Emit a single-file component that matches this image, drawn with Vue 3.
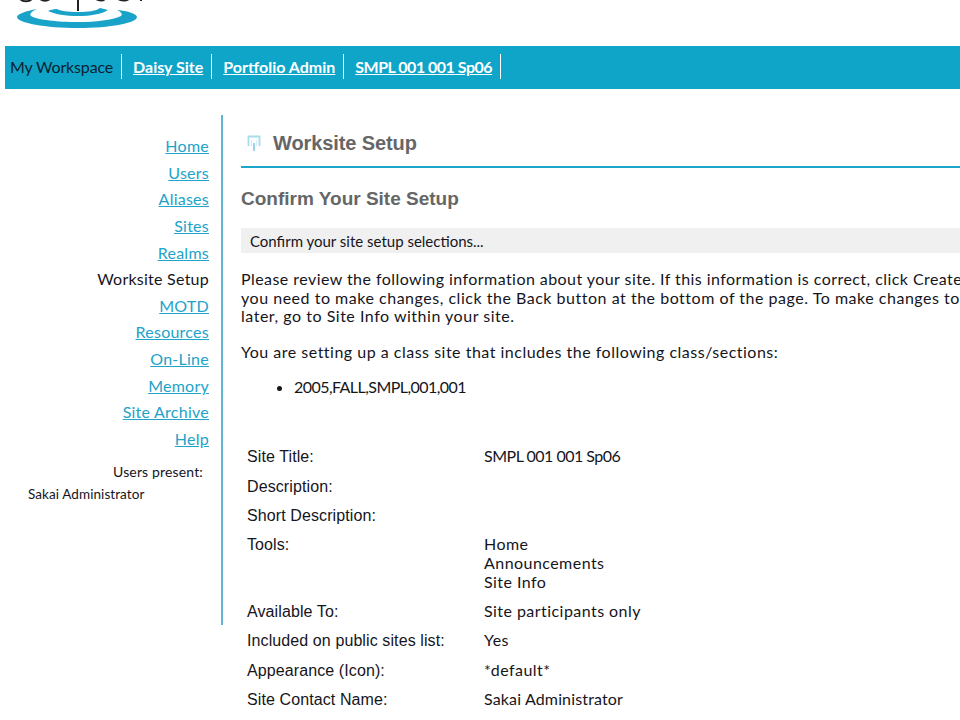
<script setup>
const links = [
  { t: 'Home', a: true }, { t: 'Users', a: true }, { t: 'Aliases', a: true }, { t: 'Sites', a: true },
  { t: 'Realms', a: true }, { t: 'Worksite Setup', a: false }, { t: 'MOTD', a: true }, { t: 'Resources', a: true },
  { t: 'On-Line', a: true }, { t: 'Memory', a: true }, { t: 'Site Archive', a: true }, { t: 'Help', a: true }
]
const rows = [
  { l: 'Site Title:', v: ['SMPL 001 001 Sp06'] },
  { l: 'Description:', v: [''] },
  { l: 'Short Description:', v: [''] },
  { l: 'Tools:', v: ['Home', 'Announcements', 'Site Info'] },
  { l: 'Available To:', v: ['Site participants only'] },
  { l: 'Included on public sites list:', v: ['Yes'] },
  { l: 'Appearance (Icon):', v: ['*default*'] },
  { l: 'Site Contact Name:', v: ['Sakai Administrator'] }
]
</script>

<template>
  <div class="page">
    <header class="logo">
      <svg width="160" height="46" viewBox="0 0 160 46">
        <path d="M37 9 C26 11 17 14 17 17 C17 23 46 28 78 28 C110 28 137 23 137 17 C137 14 128 11 117 10 C121 12 123 14 121 16 C112 20 96 22 78 22 C58 22 38 20 31 16 C29 14 32 11 37 9Z" fill="#1aa3c9"/>
        <path d="M48 11 C54 14 66 16 78 16 C90 16 102 14 108 10 C104 9 101 8 100 8 C96 11 88 12 78 12 C68 12 60 11 57 9 C53 9 50 10 48 11Z" fill="#1aa3c9"/>
        <path d="M20 -1 C23 2 29 2 32 -1 M40 -1 C43 1 47 1 50 -1 M78 0 V11 M96 -1 C99 1 103 1 105 -1 M118 -1 C121 1 126 1 129 -1 M141 0 V1" stroke="#222" stroke-width="2" fill="none"/>
      </svg>
    </header>
    <nav class="sitenav">
      <span class="tab current">My Workspace</span>
      <a class="tab">Daisy Site</a>
      <a class="tab">Portfolio Admin</a>
      <a class="tab">SMPL 001 001 Sp06</a>
    </nav>
    <div class="body">
      <aside class="side">
        <ul class="menu">
          <li v-for="l in links" :key="l.t" :class="{ link: l.a }">{{ l.t }}</li>
        </ul>
        <div class="present">Users present:</div>
        <div class="who">Sakai Administrator</div>
      </aside>
      <main class="main">
        <div class="title">
          <svg class="ticon" width="14" height="17" viewBox="0 0 14 17">
            <path d="M1.5 11 V1.5 H12.5 V11" stroke="#a9dcec" stroke-width="1.8" fill="none"/>
            <path d="M4.5 11 V5 M9.5 11 V5" stroke="#d3eef6" stroke-width="1.2" fill="none"/>
            <path d="M7 8 V16" stroke="#8fd2e6" stroke-width="1.8" fill="none"/>
          </svg>
          <h1>Worksite Setup</h1>
        </div>
        <h2>Confirm Your Site Setup</h2>
        <div class="instr">Confirm your site setup selections...</div>
        <p class="para">Please review the following information about your site. If this information is correct, click Create<br>you need to make changes, click the Back button at the bottom of the page. To make changes to<br>later, go to Site Info within your site.</p>
        <p class="para second">You are setting up a class site that includes the following class/sections:</p>
        <ul class="sections"><li>2005,FALL,SMPL,001,001</li></ul>
        <div class="table">
          <div v-for="r in rows" :key="r.l" class="row">
            <div class="label">{{ r.l }}</div>
            <div class="value"><div v-for="(v, i) in r.v" :key="i">{{ v }}</div></div>
          </div>
        </div>
      </main>
    </div>
  </div>
</template>

<style>
html, body { margin: 0; background: #fff; overflow: hidden; }
</style>

<style scoped>
.page { width: 960px; height: 720px; overflow: hidden; font-family: Lato, "Open Sans", sans-serif; color: #15151c; letter-spacing: 0.45px; }
.logo { height: 46px; overflow: hidden; }
.logo svg { display: block; }
.sitenav { margin-left: 5px; height: 43px; background: #0ea5c9; display: flex; align-items: center; font-size: 16px; padding-left: 5px; padding-bottom: 2px; box-sizing: border-box; letter-spacing: 0; }
.tab { border-right: 1px solid #fff; line-height: 25px; margin-right: 11px; padding-right: 8px; color: #fff; text-decoration: underline; font-weight: 700; white-space: nowrap; }
.tab:last-child { letter-spacing: -0.5px; }
.tab.current { color: #0a2230; text-decoration: none; font-weight: 400; letter-spacing: -0.15px; }
.body { display: flex; align-items: flex-start; padding-top: 26px; }
.side { width: 221px; border-right: 2px solid #5fb6d2; flex: none; text-align: right; padding-top: 18px; height: 492px; }
.menu { list-style: none; margin: 0; padding: 0 12px 0 0; font-size: 16px; letter-spacing: 0.25px; }
.menu li { height: 26.65px; line-height: 26.65px; white-space: nowrap; }
.menu .link { color: #22a3c8; text-decoration: underline; }
.present { font-size: 14px; letter-spacing: 0.15px; padding-right: 18px; margin-top: 9px; line-height: 20px; }
.who { font-size: 13.5px; letter-spacing: 0.08px; text-align: left; padding-left: 28px; margin-top: 2px; line-height: 20px; }
.main { flex: 1; min-width: 0; padding-left: 18px; white-space: nowrap; overflow: hidden; }
.title { display: flex; align-items: center; height: 45px; padding-top: 6px; border-bottom: 2px solid #1ba7cc; }
.ticon { margin: 0 12px 0 6px; }
h1 { margin: 0; font: bold 20px "Liberation Sans", sans-serif; color: #666; letter-spacing: -0.1px; }
h2 { margin: 20px 0 0; font: bold 19px/22px "Liberation Sans", sans-serif; color: #666; letter-spacing: 0; }
.instr { margin-top: 18px; background: #f0f0f0; height: 25px; line-height: 26px; padding-left: 9px; font-size: 15px; letter-spacing: 0; }
.para { margin: 17px 0 0; font-size: 16px; line-height: 18.5px; letter-spacing: 0.52px; }
.para::first-line { letter-spacing: 0.44px; }
.para.second { margin-top: 17px; }
.para.second::first-line { letter-spacing: 0.5px; }
.sections { margin: 16px 0 0; padding-left: 53px; font-size: 16px; line-height: 20px; letter-spacing: -0.55px; }
.table { margin-top: 45px; padding-left: 6px; font-size: 16px; }
.row { display: flex; padding: 5.2px 0; }
.row:first-child .value { letter-spacing: -0.5px; }
.row:last-child .value { letter-spacing: 0.15px; }
.label { width: 237px; font-family: "Liberation Sans", sans-serif; line-height: 19px; font-size: 16px; letter-spacing: 0.1px; }
.value { line-height: 18.8px; min-height: 19px; }
</style>
